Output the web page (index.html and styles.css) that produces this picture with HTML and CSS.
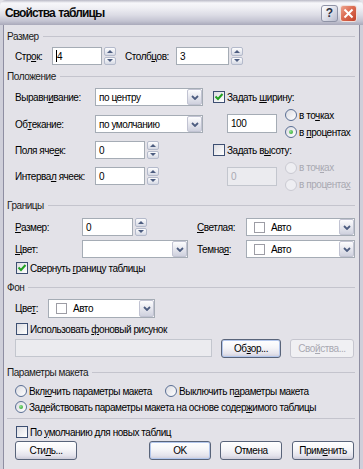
FILE: index.html
```html
<!DOCTYPE html>
<html lang="ru">
<head>
    <meta charset="UTF-8">
    <title>Свойства таблицы</title>
    <link rel="stylesheet" href="styles.css">
</head>
<body>

<div class="window">
    <!-- Title bar -->
    <div class="titlebar">
        <span class="title">Свойства таблицы</span>
        <span class="tb-btn help">?</span>
        <span class="tb-btn close">
            <svg width="11" height="11" viewBox="0 0 11 11"><path d="M1.5 1.5 L9.5 9.5 M9.5 1.5 L1.5 9.5" stroke="#fff" stroke-width="2" fill="none"/></svg>
        </span>
    </div>

    <div class="frame">
        <!-- Размер -->
        <div class="group-title mt4">Размер</div>
        <div class="row mt4">
            <span class="lbl w37">Стр<u>о</u>к:</span>
            <div class="field w50"><span class="caret"></span>4</div>
            <div class="spin"><span class="up"></span><span class="down"></span></div>
            <span class="lbl w51 ml9">Столб<u>ц</u>ов:</span>
            <div class="field w53">3</div>
            <div class="spin"><span class="up"></span><span class="down"></span></div>
        </div>

        <!-- Положение -->
        <div class="group-title mt4">Положение</div>
        <div class="pos">
            <div class="pos-left">
                <div class="row">
                    <span class="lbl w80">Выравн<u>и</u>вание:</span>
                    <div class="select w108"><span class="value">по центру</span><span class="arrow"><svg width="8" height="5" viewBox="0 0 8 5"><path d="M1 1 L4 4 L7 1" stroke="#4d5d80" stroke-width="1.8" fill="none"/></svg></span></div>
                </div>
                <div class="row mt9">
                    <span class="lbl w80">Об<u>т</u>екание:</span>
                    <div class="select w108"><span class="value">по умолчанию</span><span class="arrow"><svg width="8" height="5" viewBox="0 0 8 5"><path d="M1 1 L4 4 L7 1" stroke="#4d5d80" stroke-width="1.8" fill="none"/></svg></span></div>
                </div>
                <div class="row mt8">
                    <span class="lbl w80">Поля яче<u>е</u>к:</span>
                    <div class="field w50">0</div>
                    <div class="spin"><span class="up"></span><span class="down"></span></div>
                </div>
                <div class="row mt8">
                    <span class="lbl w80">Интерва<u>л</u> ячеек:</span>
                    <div class="field w50">0</div>
                    <div class="spin"><span class="up"></span><span class="down"></span></div>
                </div>
            </div>

            <div class="pos-right">
                <div class="checkrow h18">
                    <span class="check checked"><svg width="10" height="10" viewBox="0 0 10 10"><path d="M1.5 4.5 L4 7 L8.5 2" stroke="#21a121" stroke-width="2" fill="none"/></svg></span>
                    <span>Задать <u>ш</u>ирину:</span>
                </div>
                <div class="sub h35">
                    <div class="field w50">100</div>
                    <div class="radios">
                        <div class="radiorow"><span class="radio"></span><span>в то<u>ч</u>ках</span></div>
                        <div class="radiorow"><span class="radio on"></span><span>в <u>п</u>роцентах</span></div>
                    </div>
                </div>
                <div class="checkrow h18">
                    <span class="check"></span>
                    <span>Задать в<u>ы</u>соту:</span>
                </div>
                <div class="sub h34 disabled">
                    <div class="field w50 off">0</div>
                    <div class="radios">
                        <div class="radiorow"><span class="radio off"></span><span>в точ<u>к</u>ах</span></div>
                        <div class="radiorow"><span class="radio off"></span><span>в процента<u>х</u></span></div>
                    </div>
                </div>
            </div>
        </div>

        <!-- Границы -->
        <div class="group-title mt5">Границы</div>
        <div class="row mt6">
            <span class="lbl w67"><u>Р</u>азмер:</span>
            <div class="box w106">
                <div class="field w51">0</div>
                <div class="spin"><span class="up"></span><span class="down"></span></div>
            </div>
            <span class="lbl w49 ml9"><u>С</u>ветлая:</span>
            <div class="select w109"><span class="value"><span class="swatch"></span>Авто</span><span class="arrow"><svg width="8" height="5" viewBox="0 0 8 5"><path d="M1 1 L4 4 L7 1" stroke="#4d5d80" stroke-width="1.8" fill="none"/></svg></span></div>
        </div>
        <div class="row mt4">
            <span class="lbl w67"><u>Ц</u>вет:</span>
            <div class="select w106"><span class="value"></span><span class="arrow"><svg width="8" height="5" viewBox="0 0 8 5"><path d="M1 1 L4 4 L7 1" stroke="#4d5d80" stroke-width="1.8" fill="none"/></svg></span></div>
            <span class="lbl w49 ml9">Темна<u>я</u>:</span>
            <div class="select w109"><span class="value"><span class="swatch"></span>Авто</span><span class="arrow"><svg width="8" height="5" viewBox="0 0 8 5"><path d="M1 1 L4 4 L7 1" stroke="#4d5d80" stroke-width="1.8" fill="none"/></svg></span></div>
        </div>
        <div class="checkrow row h16 mt2">
            <span class="check checked"><svg width="10" height="10" viewBox="0 0 10 10"><path d="M1.5 4.5 L4 7 L8.5 2" stroke="#21a121" stroke-width="2" fill="none"/></svg></span>
            <span>Свернуть <u>г</u>раницу таблицы</span>
        </div>

        <!-- Фон -->
        <div class="group-title mt4">Фон</div>
        <div class="row h19 mt5">
            <span class="lbl w33">Цве<u>т</u>:</span>
            <div class="select w107 h19"><span class="value"><span class="swatch"></span>Авто</span><span class="arrow"><svg width="8" height="5" viewBox="0 0 8 5"><path d="M1 1 L4 4 L7 1" stroke="#4d5d80" stroke-width="1.8" fill="none"/></svg></span></div>
        </div>
        <div class="checkrow row h16 mt3">
            <span class="check"></span>
            <span>Использовать <u>ф</u>оновый рисунок</span>
        </div>
        <div class="row mt2">
            <div class="field w197 off"></div>
            <span class="btn blue w60 ml9">Об<u>з</u>ор...</span>
            <span class="btn off w64 ml9">Сво<u>й</u>ства...</span>
        </div>

        <!-- Параметры макета -->
        <div class="group-title mt8">Параметры макета</div>
        <div class="row h16 mt4">
            <div class="radiorow w150"><span class="radio"></span><span>Вкл<u>ю</u>чить параметры макета</span></div>
            <div class="radiorow"><span class="radio"></span><span>Выключить п<u>а</u>раметры макета</span></div>
        </div>
        <div class="row h16">
            <div class="radiorow"><span class="radio on"></span><span>Задействовать параметры макета на основе содер<u>ж</u>имого таблицы</span></div>
        </div>

        <div class="separator"></div>

        <div class="checkrow row h16 mt5">
            <span class="check"></span>
            <span>По <u>у</u>молчанию для новых таблиц</span>
        </div>
        <div class="row buttons mt1">
            <span class="btn w62">Сти<u>л</u>ь...</span>
            <span class="btn blue w62 push">OK</span>
            <span class="btn w62 ml9">Отмена</span>
            <span class="btn w62 ml10">Прим<u>е</u>нить</span>
        </div>
    </div>
</div>

</body>
</html>
```

FILE: styles.css
```css
* {
    box-sizing: border-box;
}

body {
    margin: 0;
    font-family: "Liberation Sans", Arial, sans-serif;
    font-size: 10px;
    letter-spacing: -0.45px;
    color: #000;
    background-color: #e3e2e8;
}

u {
    text-decoration-thickness: 1px;
    text-underline-offset: 1px;
}

.window {
    width: 363px;
    height: 469px;
    display: flex;
    flex-direction: column;
}

/* title bar */
.titlebar {
    height: 25px;
    flex: none;
    display: flex;
    align-items: center;
    padding: 0 6px 0 5px;
    border-radius: 6px 6px 0 0;
    background: linear-gradient(to bottom, #b9b9c6 0, #f7f7fa 3px, #efeff4 8px, #dcdce5 15px, #c4c4d2 21px, #a9a9ba 25px);
}

.title {
    flex: 1;
    font-size: 12px;
    font-weight: bold;
    letter-spacing: -0.9px;
    word-spacing: 1px;
    color: #0a0a0a;
    padding-top: 1px;
}

.tb-btn {
    width: 17px;
    height: 17px;
    border-radius: 3px;
    display: flex;
    align-items: center;
    justify-content: center;
    margin-top: 1px;
}

.help {
    margin-right: 2px;
    border: 1px solid #8f93a6;
    background: linear-gradient(135deg, #ffffff 0%, #dfe0ea 50%, #b7bacb 100%);
    color: #2c3040;
    font-weight: bold;
    font-size: 12px;
    letter-spacing: 0;
}

.close {
    border: 1px solid #f0e0dc;
    background: linear-gradient(135deg, #eda48f 0%, #dc6c52 45%, #c1412a 100%);
}

/* dialog frame */
.frame {
    flex: 1;
    border-left: 3px solid #cfcfda;
    border-right: 3px solid #cfcfda;
    box-shadow: inset 1px 0 0 #8e8ea2, inset -1px 0 0 #8e8ea2;
    padding: 0 5px 0 4px;
    background-color: #e3e2e8;
}

.group-title {
    height: 14px;
    display: flex;
    align-items: center;
    gap: 4px;
    color: #1a1a1a;
}

.group-title::after {
    content: "";
    flex: 1;
    border-top: 1px solid #c4c4cd;
}

.row {
    display: flex;
    align-items: center;
    height: 18px;
    margin-left: 8px;
}

.lbl {
    flex: none;
    white-space: nowrap;
}

.box {
    display: flex;
    align-items: center;
}

/* text fields */
.field {
    height: 18px;
    flex: none;
    display: flex;
    align-items: center;
    padding: 0 3px;
    border: 1px solid #a5acb5;
    background-color: #fff;
}

.field.off {
    background-color: #ebebef;
    border-color: #c3c6ce;
    color: #a9a9b2;
}

.caret {
    width: 1px;
    height: 12px;
    background-color: #000;
}

/* spinner */
.spin {
    width: 12px;
    height: 18px;
    margin-left: 2px;
    display: flex;
    flex-direction: column;
    gap: 1px;
}

.spin span {
    flex: 1;
    border: 1px solid #b4bacb;
    border-radius: 2px;
    background: linear-gradient(#fdfdfe, #d6d9e4);
    display: flex;
    align-items: center;
    justify-content: center;
}

.spin span::after {
    content: "";
    border-left: 3px solid transparent;
    border-right: 3px solid transparent;
}

.spin .up::after {
    border-bottom: 3px solid #4d5d80;
}

.spin .down::after {
    border-top: 3px solid #4d5d80;
}

/* drop-down */
.select {
    height: 18px;
    flex: none;
    display: flex;
    align-items: stretch;
    border: 1px solid #a5acb5;
    background-color: #fff;
}

.select .value {
    flex: 1;
    display: flex;
    align-items: center;
    padding-left: 3px;
    white-space: nowrap;
}

.select .arrow {
    width: 15px;
    border: 1px solid #c1c3d2;
    border-radius: 2px;
    background: linear-gradient(#fdfdfe, #cfd1de);
    display: flex;
    align-items: center;
    justify-content: center;
}

.swatch {
    width: 11px;
    height: 11px;
    margin: 0 6px 0 4px;
    border: 1px solid #9d9da5;
    background-color: #fff;
}

/* checkbox */
.checkrow {
    display: flex;
    align-items: center;
    gap: 2px;
    white-space: nowrap;
}

.check {
    width: 12px;
    height: 12px;
    flex: none;
    margin-left: 1px;
    border: 1px solid #3d4f72;
    background: linear-gradient(135deg, #dcdce2, #ffffff);
    display: flex;
    align-items: center;
    justify-content: center;
}

/* radio */
.radiorow {
    display: flex;
    align-items: center;
    gap: 2px;
    height: 17px;
    white-space: nowrap;
    flex: none;
}

.radio {
    width: 12px;
    height: 12px;
    flex: none;
    border-radius: 50%;
    border: 1px solid #5a6f94;
    background: linear-gradient(135deg, #dcdce2, #ffffff);
    display: flex;
    align-items: center;
    justify-content: center;
}

.radio.on::after {
    content: "";
    width: 4px;
    height: 4px;
    border-radius: 50%;
    background: radial-gradient(circle at 35% 35%, #8ee08e, #21a121);
}

.radio.off {
    border-color: #cacad2;
    background: #eeeef2;
}

.disabled {
    color: #a9a9b2;
}

/* Положение layout */
.pos {
    display: flex;
    margin-top: 5px;
    margin-left: 8px;
}

.pos-left {
    width: 188px;
    flex: none;
}

.pos-left .row {
    margin-left: 0;
}

.pos-right {
    margin-left: 9px;
    display: flex;
    flex-direction: column;
}

.sub {
    display: flex;
    align-items: center;
    padding-left: 15px;
}

.sub .field {
    height: 19px;
}

.radios {
    margin-left: 8px;
    display: flex;
    flex-direction: column;
}

/* buttons */
.btn {
    height: 19px;
    flex: none;
    display: flex;
    align-items: center;
    justify-content: center;
    border: 1px solid #59647a;
    border-radius: 3px;
    background: linear-gradient(#ffffff 0%, #f5f5f8 45%, #e4e3ec 80%, #cdccd9 100%);
    white-space: nowrap;
}

.btn.blue {
    box-shadow: inset 0 0 0 1px #b4c7ec;
}

.btn.off {
    border-color: #c6c6cf;
    background: #f0f0f3;
    color: #a9a9b2;
}

.separator {
    margin-top: 3px;
    border-top: 1px solid #c4c4cd;
}

.buttons {
    margin-right: 1px;
}

.push {
    margin-left: auto;
}

/* sizes */
.w33 { width: 33px; }
.w37 { width: 37px; }
.w49 { width: 49px; }
.w50 { width: 50px; }
.w51 { width: 51px; }
.w53 { width: 53px; }
.w60 { width: 60px; }
.w62 { width: 62px; }
.w64 { width: 64px; }
.w67 { width: 67px; }
.w80 { width: 80px; }
.w106 { width: 106px; }
.w107 { width: 107px; }
.w108 { width: 108px; }
.w109 { width: 109px; }
.w150 { width: 150px; }
.w197 { width: 197px; }

.h16 { height: 16px; }
.h18 { height: 18px; }
.h19 { height: 19px; }
.h34 { height: 34px; }
.h35 { height: 35px; }

.mt1 { margin-top: 1px; }
.mt2 { margin-top: 2px; }
.mt3 { margin-top: 3px; }
.mt4 { margin-top: 4px; }
.mt5 { margin-top: 5px; }
.mt6 { margin-top: 6px; }
.mt8 { margin-top: 8px; }
.mt9 { margin-top: 9px; }

.ml9 { margin-left: 9px; }
.ml10 { margin-left: 10px; }
```
